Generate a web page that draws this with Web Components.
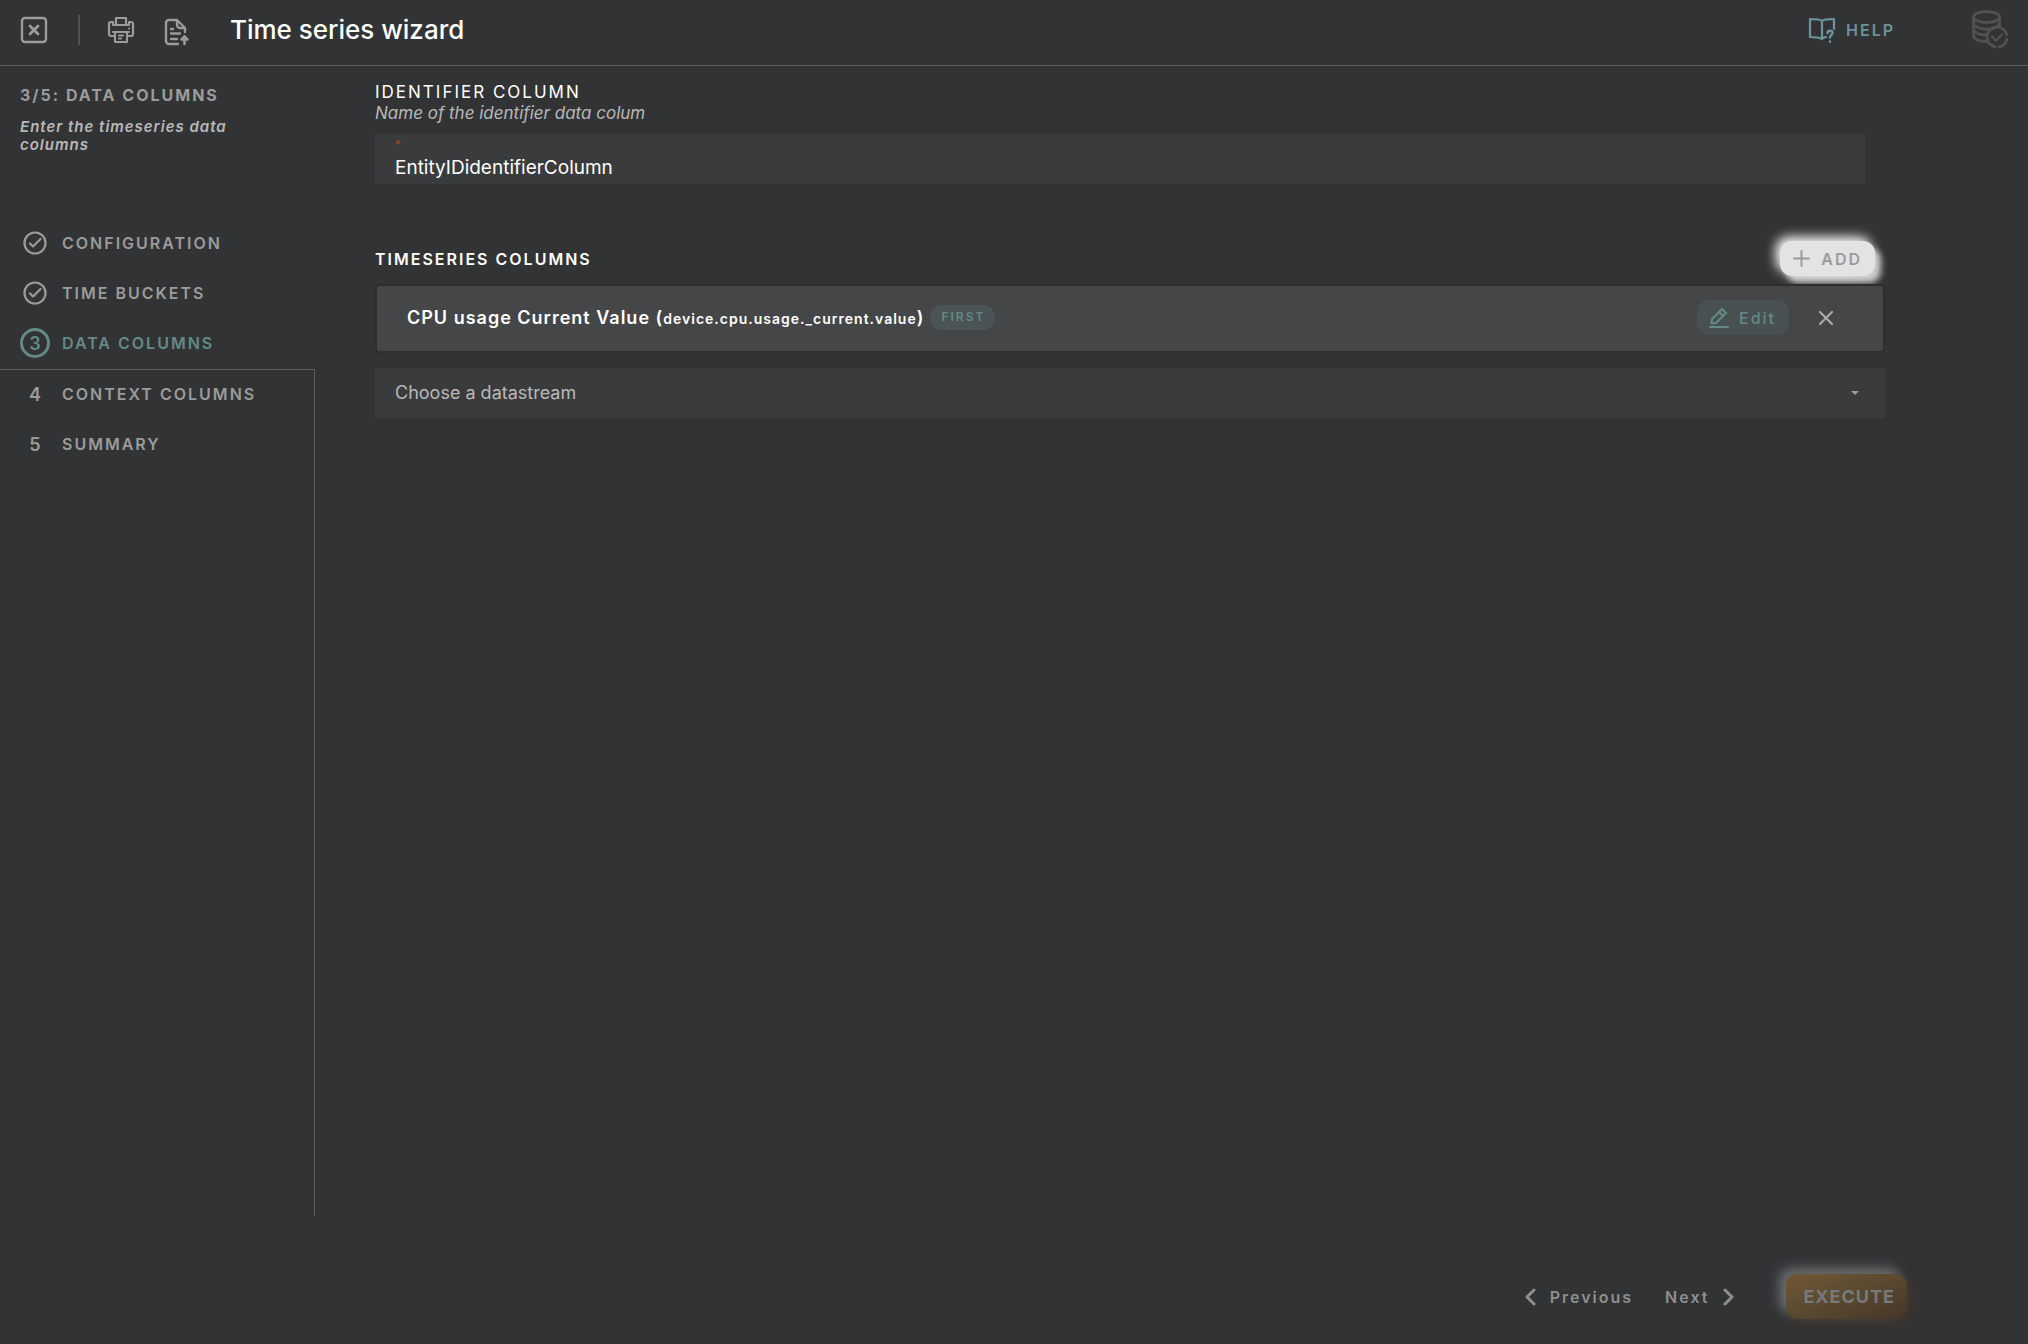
<!DOCTYPE html>
<html lang="en">
<head>
<meta charset="utf-8">
<title>Time series wizard</title>
<style>
  :root {
    --bg: #323335;
    --field: #3a3b3c;
    --line: #5d5e60;
    --grey: #9b9b9b;
    --light: #b9b9b9;
    --teal: #648a87;
  }
  body {
    margin: 0;
    background: var(--bg);
    color: #fff;
    font-family: Inter, "Open Sans", sans-serif;
    font-size: 16px;
  }
</style>
</head>
<body>
<wizard-page>
  <wizard-header slot="header" title-text="Time series wizard"></wizard-header>
  <wizard-steps slot="steps" heading="3/5: DATA COLUMNS" hint="Enter the timeseries data columns">
    <wizard-step number="1" state="done">CONFIGURATION</wizard-step>
    <wizard-step number="2" state="done">TIME BUCKETS</wizard-step>
    <wizard-step number="3" state="current">DATA COLUMNS</wizard-step>
    <wizard-step number="4" state="next">CONTEXT COLUMNS</wizard-step>
    <wizard-step number="5">SUMMARY</wizard-step>
  </wizard-steps>
  <text-field label="IDENTIFIER COLUMN" hint="Name of the identifier data colum" value="EntityIDidentifierColumn"></text-field>
  <column-list label="TIMESERIES COLUMNS">
    <column-card path="device.cpu.usage._current.value" badge="FIRST">CPU usage Current Value</column-card>
    <stream-select slot="picker" placeholder="Choose a datastream"></stream-select>
  </column-list>
  <wizard-footer slot="footer"></wizard-footer>
</wizard-page>

<script>
const BASE = `
  :host, * { box-sizing: border-box; }
  button, input, select { font: inherit; color: inherit; background: none; border: 0; margin: 0; padding: 0; }
  button { cursor: pointer; letter-spacing: 2px; font-weight: 600; }
  svg { display: block; fill: none; stroke: currentColor; stroke-linecap: round; stroke-linejoin: round; flex: none; }
`;

class WizardPage extends HTMLElement {
  constructor() {
    super();
    this.attachShadow({ mode: 'open' });
    this.shadowRoot.innerHTML = `
      <style>
        ${BASE}
        :host {
          display: grid;
          grid-template: auto 1fr 128px / 315px 1fr;
          min-height: 100vh;
        }
        .header, .footer { grid-column: 1 / -1; }
        .steps { display: grid; }
        main { padding: 17px 143px 0 60px; }
      </style>
      <div class="header"><slot name="header"></slot></div>
      <div class="steps"><slot name="steps"></slot></div>
      <main><slot></slot></main>
      <div class="footer"><slot name="footer"></slot></div>
    `;
  }
}

class WizardHeader extends HTMLElement {
  constructor() {
    super();
    this.attachShadow({ mode: 'open' });
  }

  connectedCallback() {
    this.shadowRoot.innerHTML = `
      <style>
        ${BASE}
        :host {
          display: flex;
          align-items: center;
          height: 66px;
          padding: 0 20px 5px;
          border-bottom: 1px solid var(--line);
          color: var(--grey);
        }
        .rule { width: 2px; height: 30px; margin: 0 27px 0 30px; background: #505153; }
        .file { margin: 4px 0 0 28px; }
        h1 { margin: 0 auto 0 39px; color: #fff; font-size: 26px; font-weight: 500; line-height: 32px; }
        a {
          display: flex;
          align-items: center;
          gap: 10px;
          margin-right: 75px;
          color: #6d939b;
          font-weight: 600;
          letter-spacing: 2px;
          text-decoration: none;
        }
        .data { color: #505153; }
      </style>
      <button aria-label="Close">
        <svg width="28" height="28" viewBox="0 0 28 28" stroke-width="2.4">
          <rect x="2" y="2" width="24" height="24" rx="3"/>
          <path d="M10 10l8 8M18 10l-8 8" stroke-width="2.8"/>
        </svg>
      </button>
      <div class="rule"></div>
      <button aria-label="Print">
        <svg width="28" height="28" viewBox="0 0 28 28" stroke-width="2.2">
          <path d="M9 9V2h10v7zM7 20H4a2 2 0 0 1-2-2V8a2 2 0 0 1 2-2h2v3h16V6h2a2 2 0 0 1 2 2v10a2 2 0 0 1-2 2h-3"/>
          <path d="M6 16h16M8 16v10h12V16M12 19.500h4M12 22.500h2M22 12.500v.1" stroke-width="2"/>
        </svg>
      </button>
      <button class="file" aria-label="Export file">
        <svg width="28" height="28" viewBox="0 0 28 28" stroke-width="2.4">
          <path d="M15 26H6a3 3 0 0 1-3-3V5a3 3 0 0 1 3-3h8l8 8v4M14 3v4a3 3 0 0 0 3 3h4M8 11h2M8 15.500h9M8 21h6"/>
          <path d="M21.500 26v-7M18.500 21.500l3-3 3 3z" stroke-width="2.6"/>
        </svg>
      </button>
      <h1>${this.getAttribute('title-text')}</h1>
      <a href="#help">
        <svg width="28" height="28" viewBox="0 0 28 28" stroke-width="2.2">
          <path d="M14 5c-2-2-6-2-12-2v18c5 0 9 0 12 2 1-1 2-2 4-2M14 5v18M14 5c2-2 6-2 12-2v10"/>
          <path d="M19.500 17c0-3 5-3 5 0 0 2-2.500 2-2.500 4.500M22 25.500v.2" stroke-width="2.4"/>
        </svg>
        HELP
      </a>
      <svg class="data" width="38" height="40" viewBox="0 0 38 40" stroke-width="2.800" stroke-linecap="butt">
        <ellipse cx="16.500" cy="7" rx="13" ry="5.500"/>
        <path d="M3.500 7v18c0 4 5 6.500 13 6.500M29.500 7v9M3.500 13c1 7 21 9 26 1M3.500 20c2 4 6 5 13 5"/>
        <path d="M25.200 36.800A10 10 0 1 1 36.800 25M36.800 29.200A10 10 0 0 1 29 36.800"/>
        <path d="M22 26.500l4 4 6-6" stroke-width="2.400"/>
      </svg>
    `;
  }
}

class WizardSteps extends HTMLElement {
  constructor() {
    super();
    this.attachShadow({ mode: 'open' });
  }

  connectedCallback() {
    this.shadowRoot.innerHTML = `
      <style>
        ${BASE}
        :host { display: flex; flex-direction: column; }
        .intro { height: 153px; padding: 19px 60px 0 20px; }
        h2 { margin: 0; color: var(--grey); font-size: 16px; font-weight: 700; line-height: 20px; letter-spacing: 2px; white-space: nowrap; }
        p { margin: 13px 0 0; color: var(--light); font-size: 15px; font-style: italic; font-weight: 600; line-height: 18px; letter-spacing: 1px; }
        nav { display: flex; flex-direction: column; flex: 1; }
      </style>
      <div class="intro">
        <h2>${this.getAttribute('heading')}</h2>
        <p>${this.getAttribute('hint')}</p>
      </div>
      <nav aria-label="Steps"><slot></slot></nav>
    `;
  }
}

class WizardStep extends HTMLElement {
  constructor() {
    super();
    this.attachShadow({ mode: 'open' });
  }

  connectedCallback() {
    const check = `
      <svg width="24" height="24" viewBox="0 0 24 24" stroke-width="2.2">
        <circle cx="12" cy="12" r="10.500"/><path d="M7 12.500l3 3 7.500-7.500"/>
      </svg>`;
    const done = this.getAttribute('state') === 'done';
    this.shadowRoot.innerHTML = `
      <style>
        ${BASE}
        :host { display: block; color: var(--grey); }
        :host([state="current"]) { color: var(--teal); }
        :host([state="next"]) { border-top: 1px solid var(--line); border-right: 1px solid var(--line); }
        :host([number="5"]) { flex: 1; border-right: 1px solid var(--line); }
        button { display: flex; align-items: center; gap: 12px; height: 50px; padding: 0 0 2px 20px; }
        .mark { display: grid; place-items: center; width: 30px; height: 30px; border-radius: 50%; font-size: 18px; letter-spacing: 0; }
        :host([state="current"]) .mark { border: 3px solid; }
      </style>
      <button>
        <span class="mark">${done ? check : this.getAttribute('number')}</span>
        <slot></slot>
      </button>
    `;
  }
}

class TextField extends HTMLElement {
  constructor() {
    super();
    this.attachShadow({ mode: 'open' });
  }

  connectedCallback() {
    this.shadowRoot.innerHTML = `
      <style>
        ${BASE}
        :host { display: block; margin-right: 20px; }
        label { display: block; font-size: 17px; font-weight: 400; line-height: 18px; letter-spacing: 2px; }
        p { margin: 2px 0 0; color: var(--light); font-size: 17px; font-style: italic; line-height: 20px; }
        .box { height: 50px; margin-top: 11px; padding: 4px 20px 0; background: var(--field); }
        .star { display: block; color: #a8442c; font-size: 12px; line-height: 14px; }
        input { display: block; width: 100%; height: 30px; font-size: 19px; outline: 0; }
      </style>
      <label for="field">${this.getAttribute('label')}</label>
      <p>${this.getAttribute('hint')}</p>
      <div class="box">
        <span class="star">*</span>
        <input id="field" type="text" required value="${this.getAttribute('value')}">
      </div>
    `;
  }
}

class ColumnList extends HTMLElement {
  constructor() {
    super();
    this.attachShadow({ mode: 'open' });
  }

  connectedCallback() {
    this.shadowRoot.innerHTML = `
      <style>
        ${BASE}
        :host { display: block; margin-top: 57px; }
        header { display: flex; align-items: center; justify-content: space-between; height: 35px; padding-right: 10px; }
        h2 { margin: 0; font-size: 16px; font-weight: 600; letter-spacing: 2px; }
        button {
          display: flex;
          align-items: center;
          gap: 11px;
          height: 35px;
          padding: 0 13px;
          border-radius: 12px;
          background: #e3e3e3;
          color: var(--grey);
          box-shadow: -4px -4px 12px #fff, 6px 7px 6px #c9c9c9;
        }
        .cards { margin: 8px 0 15px; }
      </style>
      <header>
        <h2>${this.getAttribute('label')}</h2>
        <button>
          <svg width="17" height="17" viewBox="0 0 17 17" stroke-width="2"><path d="M8.500 1v15M1 8.500h15"/></svg>
          ADD
        </button>
      </header>
      <div class="cards"><slot></slot></div>
      <slot name="picker"></slot>
    `;
  }
}

class ColumnCard extends HTMLElement {
  constructor() {
    super();
    this.attachShadow({ mode: 'open' });
  }

  connectedCallback() {
    this.shadowRoot.innerHTML = `
      <style>
        ${BASE}
        :host {
          position: relative;
          display: flex;
          align-items: center;
          height: 69px;
          padding: 0 49px 2px 30px;
          border: 2px solid #2d2e30;
          border-radius: 5px;
          background: #454648;
        }
        .name { font-size: 18px; font-weight: 600; letter-spacing: 1px; }
        small { font-size: 14px; }
        .badge {
          height: 25px;
          margin-left: 6px;
          padding: 0 10px 0 11px;
          border-radius: 12px;
          background: #4a5456;
          color: var(--teal);
          font-size: 12px;
          font-weight: 600;
          line-height: 24px;
          letter-spacing: 2px;
        }
        .edit {
          display: flex;
          align-items: center;
          gap: 10px;
          height: 35px;
          margin-left: auto;
          padding: 0 13px 0 12px;
          border-radius: 12px;
          background: #485052;
          color: var(--teal);
          font-weight: 500;
        }
        .remove { margin-left: 29px; color: #aaa; }
      </style>
      <span class="name"><slot></slot> (<small>${this.getAttribute('path')}</small>)</span>
      <span class="badge">${this.getAttribute('badge')}</span>
      <button class="edit">
        <svg width="20" height="20" viewBox="0 0 20 20" stroke-width="2">
          <path d="M1 19h18M2.500 15.500l.5-4.500L13 1l4 4L7 15zM10 4l4 4"/>
        </svg>
        Edit
      </button>
      <button class="remove" aria-label="Remove">
        <svg width="16" height="16" viewBox="0 0 16 16" stroke-width="2.2"><path d="M2 2l12 12M14 2L2 14"/></svg>
      </button>
    `;
  }
}

class StreamSelect extends HTMLElement {
  constructor() {
    super();
    this.attachShadow({ mode: 'open' });
  }

  connectedCallback() {
    this.shadowRoot.innerHTML = `
      <style>
        ${BASE}
        :host { display: grid; align-items: center; background: var(--field); color: var(--light); }
        select, svg { grid-area: 1 / 1; }
        select { appearance: none; width: 100%; height: 50px; padding: 0 20px 2px; font-size: 18px; }
        svg { justify-self: end; margin-right: 26px; fill: var(--grey); stroke: none; pointer-events: none; }
      </style>
      <select aria-label="Datastream"><option>${this.getAttribute('placeholder')}</option></select>
      <svg width="8" height="4" viewBox="0 0 8 4"><path d="M0 0h8L4 4z"/></svg>
    `;
  }
}

class WizardFooter extends HTMLElement {
  constructor() {
    super();
    this.attachShadow({ mode: 'open' });
    this.shadowRoot.innerHTML = `
      <style>
        ${BASE}
        :host { display: flex; align-items: center; justify-content: flex-end; height: 128px; padding: 33px 121px 0 0; color: #8e8e8e; }
        button { display: flex; align-items: center; gap: 14px; }
        .next { margin-left: 32px; }
        .run {
          height: 45px;
          margin-left: 51px;
          padding: 0 12px 0 17px;
          border-radius: 12px;
          background: linear-gradient(160deg, #745733, #604e32 35%, #453629);
          color: #77797b;
          font-size: 18px;
          font-weight: 700;
          letter-spacing: 1px;
          box-shadow: -7px -6px 12px #6c6d6f, 4px 4px 14px #43372c;
        }
      </style>
      <button>
        <svg width="12" height="18" viewBox="0 0 12 18" stroke-width="3"><path d="M10 2L3 9l7 7"/></svg>
        Previous
      </button>
      <button class="next">
        Next
        <svg width="12" height="18" viewBox="0 0 12 18" stroke-width="3"><path d="M2 2l7 7-7 7"/></svg>
      </button>
      <button class="run">EXECUTE</button>
    `;
  }
}

customElements.define('wizard-page', WizardPage);
customElements.define('wizard-header', WizardHeader);
customElements.define('wizard-steps', WizardSteps);
customElements.define('wizard-step', WizardStep);
customElements.define('text-field', TextField);
customElements.define('column-list', ColumnList);
customElements.define('column-card', ColumnCard);
customElements.define('stream-select', StreamSelect);
customElements.define('wizard-footer', WizardFooter);
</script>
</body>
</html>
